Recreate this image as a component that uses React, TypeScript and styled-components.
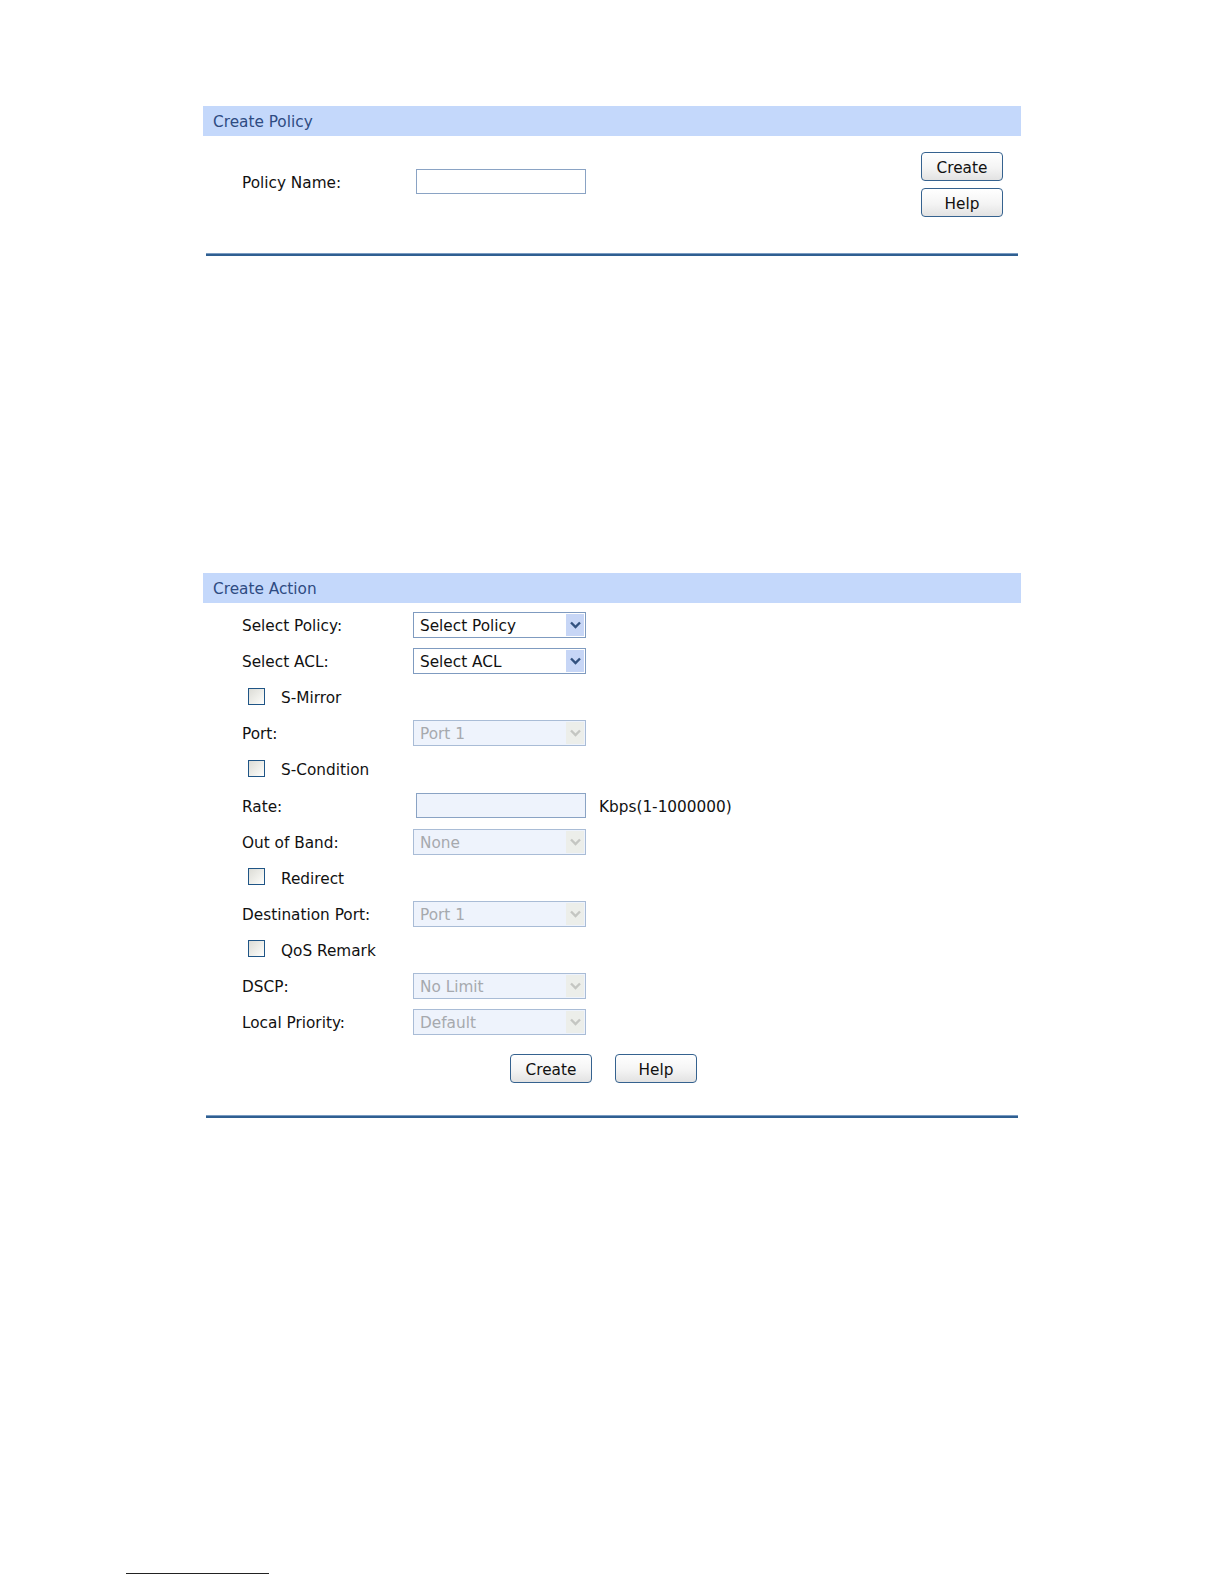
import React from 'react';
import styled, { createGlobalStyle } from 'styled-components';

const GlobalStyle = createGlobalStyle`
  html, body {
    margin: 0;
    padding: 0;
    background: #ffffff;
    overflow: hidden;
  }
  body {
    font-family: "DejaVu Sans", "Liberation Sans", Arial, sans-serif;
    font-size: 15.3px;
    color: #111111;
  }
`;

const Page = styled.div`
  height: 1584px;
  padding-top: 106px;
  box-sizing: border-box;
  overflow: hidden;
`;

const Panel = styled.section<{ $top?: number }>`
  width: 818px;
  margin-left: 203px;
  margin-top: ${p => p.$top ?? 0}px;
`;

const PanelHeader = styled.div`
  height: 30px;
  display: flex;
  align-items: center;
  padding: 2px 0 0 10px;
  box-sizing: border-box;
  background: #c4d8fb;
  color: #2e4b82;
  font-size: 15.3px;
`;

const PanelRule = styled.div`
  margin: 0 3px;
  height: 2px;
  border-top: 1px solid #7a9cc2;
  background: #2f5f91;
`;

const PolicyBody = styled.div`
  height: 117px;
  display: flex;
  justify-content: space-between;
  align-items: flex-start;
  padding: 16px 18px 0 39px;
  box-sizing: border-box;
`;

const PolicyRow = styled.div`
  display: flex;
  align-items: center;
  margin-top: 17px;
`;

const Label = styled.span`
  display: inline-block;
  width: 171px;
  flex-shrink: 0;
  padding-top: 2px;
  white-space: nowrap;
`;

const TextInput = styled.div<{ $disabled?: boolean }>`
  width: 170px;
  height: 25px;
  margin-left: 3px;
  box-sizing: border-box;
  border: 1px solid #8aa3c4;
  background: ${p => (p.$disabled ? '#eef3fc' : '#ffffff')};
`;

const ButtonStack = styled.div`
  display: flex;
  flex-direction: column;
  gap: 7px;
`;

const Button = styled.button`
  width: 82px;
  height: 29px;
  padding: 2px 0 0;
  border: 1px solid #35628f;
  border-radius: 4px;
  background: linear-gradient(#ffffff 0%, #f4f4f4 55%, #e2e2e2 100%);
  font-family: inherit;
  font-size: 15.3px;
  color: #111111;
  cursor: pointer;
`;

const ActionBody = styled.div`
  padding: 4px 0 0 39px;
`;

const Row = styled.div`
  height: 36.1px;
  display: flex;
  align-items: center;
`;

const CheckRow = styled(Row)`
  padding-left: 6px;
`;

const CheckLabel = styled.span`
  padding-top: 2px;
`;

const Checkbox = styled.span`
  width: 17px;
  height: 17px;
  box-sizing: border-box;
  border: 1px solid #1f5586;
  background: linear-gradient(135deg, #dcdcd6 0%, #f4f4f0 70%, #ffffff 100%);
  margin-right: 16px;
  margin-top: -2px;
`;

const SelectBox = styled.div<{ $disabled?: boolean }>`
  width: 173px;
  height: 26px;
  box-sizing: border-box;
  border: 1px solid ${p => (p.$disabled ? '#a9bcd6' : '#7f9bc0')};
  background: ${p => (p.$disabled ? '#eef3fc' : '#ffffff')};
  color: ${p => (p.$disabled ? '#a6a9ae' : '#111111')};
  display: flex;
  align-items: center;
  justify-content: space-between;
  padding: 0 1px 0 6px;
`;

const SelectText = styled.span`
  padding-top: 2px;
`;

const ArrowBox = styled.span<{ $disabled?: boolean }>`
  width: 18px;
  height: 22px;
  display: flex;
  align-items: center;
  justify-content: center;
  background: ${p => (p.$disabled ? '#eceeea' : '#c7d6f6')};
  color: ${p => (p.$disabled ? '#c4c6c2' : '#33527f')};
`;

const Unit = styled.span`
  margin-left: 13px;
  padding-top: 2px;
`;

const ActionButtons = styled.div`
  display: flex;
  gap: 23px;
  padding-left: 307px;
  margin-top: 14px;
  height: 61px;
`;

const Footnote = styled.div`
  width: 143px;
  height: 1px;
  background: #222222;
  margin: 455px 0 0 126px;
`;

function Chevron() {
  return (
    <svg width="11" height="8" viewBox="0 0 11 8">
      <path d="M1 1.5 L5.5 6 L10 1.5" fill="none" stroke="currentColor" strokeWidth="2.4" />
    </svg>
  );
}

function Select({ value, disabled }: { value: string; disabled?: boolean }) {
  return (
    <SelectBox $disabled={disabled}>
      <SelectText>{value}</SelectText>
      <ArrowBox $disabled={disabled}>
        <Chevron />
      </ArrowBox>
    </SelectBox>
  );
}

type Field =
  | { kind: 'select'; label: string; value: string; disabled?: boolean }
  | { kind: 'check'; label: string }
  | { kind: 'rate'; label: string };

const fields: Field[] = [
  { kind: 'select', label: 'Select Policy:', value: 'Select Policy' },
  { kind: 'select', label: 'Select ACL:', value: 'Select ACL' },
  { kind: 'check', label: 'S-Mirror' },
  { kind: 'select', label: 'Port:', value: 'Port 1', disabled: true },
  { kind: 'check', label: 'S-Condition' },
  { kind: 'rate', label: 'Rate:' },
  { kind: 'select', label: 'Out of Band:', value: 'None', disabled: true },
  { kind: 'check', label: 'Redirect' },
  { kind: 'select', label: 'Destination Port:', value: 'Port 1', disabled: true },
  { kind: 'check', label: 'QoS Remark' },
  { kind: 'select', label: 'DSCP:', value: 'No Limit', disabled: true },
  { kind: 'select', label: 'Local Priority:', value: 'Default', disabled: true },
];

export default function App() {
  return (
    <Page>
      <GlobalStyle />

      <Panel>
        <PanelHeader>Create Policy</PanelHeader>
        <PolicyBody>
          <PolicyRow>
            <Label>Policy Name:</Label>
            <TextInput />
          </PolicyRow>
          <ButtonStack>
            <Button>Create</Button>
            <Button>Help</Button>
          </ButtonStack>
        </PolicyBody>
        <PanelRule />
      </Panel>

      <Panel $top={317}>
        <PanelHeader>Create Action</PanelHeader>
        <ActionBody>
          {fields.map((f, i) => {
            if (f.kind === 'check') {
              return (
                <CheckRow key={i}>
                  <Checkbox />
                  <CheckLabel>{f.label}</CheckLabel>
                </CheckRow>
              );
            }
            if (f.kind === 'rate') {
              return (
                <Row key={i}>
                  <Label>{f.label}</Label>
                  <TextInput $disabled />
                  <Unit>Kbps(1-1000000)</Unit>
                </Row>
              );
            }
            return (
              <Row key={i}>
                <Label>{f.label}</Label>
                <Select value={f.value} disabled={f.disabled} />
              </Row>
            );
          })}
        </ActionBody>
        <ActionButtons>
          <Button>Create</Button>
          <Button>Help</Button>
        </ActionButtons>
        <PanelRule />
      </Panel>

      <Footnote />
    </Page>
  );
}
